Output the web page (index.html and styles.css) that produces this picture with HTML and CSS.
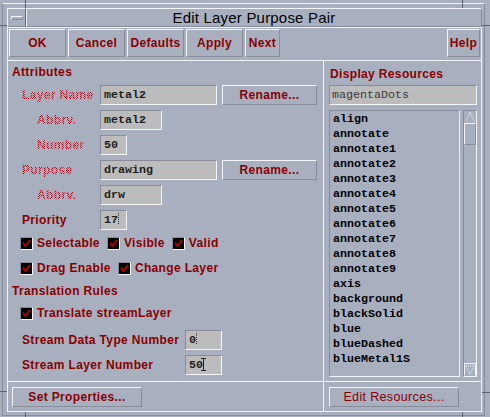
FILE: index.html
```html
<!DOCTYPE html>
<html>
<head>
<meta charset="utf-8">
<title>Edit Layer Purpose Pair</title>
<link rel="stylesheet" href="styles.css">
</head>
<body>
<div class="window">
  <span class="tick tv tl-top"></span>
  <span class="tick th tl-side"></span>
  <span class="tick tv tr-top"></span>
  <span class="tick th tr-side"></span>
  <span class="tick th bl-side"></span>
  <span class="tick tv bl-bot"></span>
  <span class="tick th br-side"></span>
  <span class="tick tv br-bot"></span>
  <div class="frame">
    <div class="titlebar">
      <div class="menubtn"><span class="dash"></span></div>
      <div class="title">Edit Layer Purpose Pair</div>
    </div>
    <div class="dialog">
      <div class="toolbar">
        <div class="btn tb">OK</div>
        <div class="btn tb">Cancel</div>
        <div class="btn tb">Defaults</div>
        <div class="btn tb">Apply</div>
        <div class="btn tb tb-next">Next</div>
        <div class="spacer"></div>
        <div class="btn tb tb-help">Help</div>
      </div>
      <div class="main">
        <div class="pane pane-l">
          <div class="body">
            <div class="sec">Attributes</div>
            <div class="rows">
              <div class="row">
                <span class="lbl stip">Layer Name</span>
                <span class="field f-long">metal2</span>
                <span class="btn rename">Rename...</span>
              </div>
              <div class="row">
                <span class="lbl stip ind alt">Abbrv.</span>
                <span class="field f-mid">metal2</span>
              </div>
              <div class="row">
                <span class="lbl stip ind">Number</span>
                <span class="field f-short">50</span>
              </div>
              <div class="row">
                <span class="lbl stip alt">Purpose</span>
                <span class="field f-long">drawing</span>
                <span class="btn rename">Rename...</span>
              </div>
              <div class="row">
                <span class="lbl stip ind">Abbrv.</span>
                <span class="field f-mid">drw</span>
              </div>
              <div class="row">
                <span class="lbl">Priority</span>
                <span class="field f-short">17<span class="caret"></span></span>
              </div>
            </div>
            <div class="chk-row cr1">
              <span class="chk"><span class="cb"><svg viewBox="0 0 11 11" width="11" height="11"><path d="M2 4.5 L4.5 8 L9 2" fill="none" stroke="#b00010" stroke-width="2"/></svg></span><span class="lbl">Selectable</span></span>
              <span class="chk"><span class="cb"><svg viewBox="0 0 11 11" width="11" height="11"><path d="M2 4.5 L4.5 8 L9 2" fill="none" stroke="#b00010" stroke-width="2"/></svg></span><span class="lbl">Visible</span></span>
              <span class="chk"><span class="cb"><svg viewBox="0 0 11 11" width="11" height="11"><path d="M2 4.5 L4.5 8 L9 2" fill="none" stroke="#b00010" stroke-width="2"/></svg></span><span class="lbl">Valid</span></span>
            </div>
            <div class="chk-row cr2">
              <span class="chk"><span class="cb"><svg viewBox="0 0 11 11" width="11" height="11"><path d="M2 4.5 L4.5 8 L9 2" fill="none" stroke="#b00010" stroke-width="2"/></svg></span><span class="lbl">Drag Enable</span></span>
              <span class="chk"><span class="cb"><svg viewBox="0 0 11 11" width="11" height="11"><path d="M2 4.5 L4.5 8 L9 2" fill="none" stroke="#b00010" stroke-width="2"/></svg></span><span class="lbl">Change Layer</span></span>
            </div>
            <div class="sec sec-small">Translation Rules</div>
            <div class="chk-row cr3">
              <span class="chk"><span class="cb"><svg viewBox="0 0 11 11" width="11" height="11"><path d="M2 4.5 L4.5 8 L9 2" fill="none" stroke="#b00010" stroke-width="2"/></svg></span><span class="lbl">Translate streamLayer</span></span>
            </div>
            <div class="row srow1">
              <span class="lbl wide">Stream Data Type Number</span>
              <span class="field f-stream">0<span class="caret"></span></span>
            </div>
            <div class="row srow2">
              <span class="lbl wide">Stream Layer Number</span>
              <span class="field f-stream">50<span class="ibeam"></span></span>
            </div>
          </div>
          <div class="foot foot-l">
            <div class="btn btn-wide">Set Properties...</div>
          </div>
        </div>
        <div class="pane pane-r">
          <div class="body body-r">
            <div class="sec sec-r">Display Resources</div>
            <div class="field f-res">magentaDots</div>
            <div class="list-wrap">
              <div class="list">
                <div>align</div>
                <div>annotate</div>
                <div>annotate1</div>
                <div>annotate2</div>
                <div>annotate3</div>
                <div>annotate4</div>
                <div>annotate5</div>
                <div>annotate6</div>
                <div>annotate7</div>
                <div>annotate8</div>
                <div>annotate9</div>
                <div>axis</div>
                <div>background</div>
                <div>blackSolid</div>
                <div>blue</div>
                <div>blueDashed</div>
                <div>blueMetal1S</div>
              </div>
              <div class="sb">
                <svg class="arrow" viewBox="0 0 12 12" width="12" height="12"><path d="M6 1.5 L1.5 10.5 M6 1.5 L10.5 10.5" fill="none" stroke="#f4f5f8" stroke-width="1" stroke-dasharray="1 1"/></svg>
                <div class="thumb"></div>
                <div class="trough"></div>
                <svg class="arrow down" viewBox="0 0 12 13" width="12" height="13"><path d="M0.5 12.5 V0.5 H11.5 V12.5" fill="none" stroke="#f4f5f8" stroke-width="1"/><path d="M6 11 L2 3 M6 11 L10 3 M2 3 H10" fill="none" stroke="#f4f5f8" stroke-width="1" stroke-dasharray="1 1"/></svg>
              </div>
            </div>
          </div>
          <div class="foot foot-r">
            <div class="btn btn-wide btn-reg">Edit Resources...</div>
          </div>
        </div>
      </div>
    </div>
  </div>
</div>
</body>
</html>
```
FILE: styles.css
```css
:root {
  --bg: #a8b0c0;
  --light: #f4f5f8;
  --dark: #878d98;
  --field: #bcbcbc;
  --red: #880000;
}

html, body {
  margin: 0;
  background: var(--bg);
  font-family: "Liberation Sans", Arial, sans-serif;
}

.window {
  position: relative;
  width: 490px;
  height: 417px;
  box-sizing: border-box;
  padding: 3px 5px 1px 2px;
  background: var(--bg);
  overflow: hidden;
}

.tick {
  position: absolute;
  background: #5e636c;
}
.tv { width: 1px; }
.th { height: 1px; }
.tl-top { left: 25px; top: 0; height: 8px; }
.tl-side { left: 0; top: 25px; width: 7px; }
.tr-top { left: 462px; top: 0; height: 8px; }
.tr-side { left: 482px; top: 25px; width: 8px; }
.bl-side { left: 0; top: 391px; width: 7px; }
.bl-bot { left: 25px; top: 412px; height: 5px; }
.br-side { left: 482px; top: 392px; width: 8px; }
.br-bot { left: 462px; top: 412px; height: 5px; }

.frame {
  height: 100%;
  box-sizing: border-box;
  border: 1px solid var(--dark);
  border-top-color: var(--light);
  padding: 4px 2px 3px 4px;
  display: flex;
  flex-direction: column;
}

.titlebar {
  display: flex;
  height: 19px;
  flex: none;
}

.menubtn {
  width: 19px;
  box-sizing: border-box;
  border: 1px solid;
  border-color: var(--light) #5e636c var(--dark) var(--light);
  display: flex;
  align-items: center;
  justify-content: center;
}

.dash {
  width: 12px;
  height: 4px;
  box-sizing: border-box;
  border: 1px solid;
  border-color: var(--light) var(--dark) var(--dark) var(--light);
}

.title {
  flex: 1;
  box-sizing: border-box;
  border: 1px solid;
  border-color: var(--light) var(--dark) var(--dark) var(--light);
  text-align: center;
  font-size: 15px;
  line-height: 17px;
  letter-spacing: 0.2px;
  color: #000;
}

.dialog {
  flex: 1;
  min-height: 0;
  display: flex;
  flex-direction: column;
  border: 1px solid var(--light);
}

.toolbar {
  display: flex;
  gap: 2px;
  height: 28px;
  padding: 1px 1px 3px 1px;
  border-bottom: 1px solid var(--light);
  flex: none;
}

.btn {
  box-sizing: border-box;
  border: 1px solid;
  border-color: var(--light) var(--dark) var(--dark) var(--light);
  display: flex;
  align-items: center;
  justify-content: center;
  color: var(--red);
  font-weight: bold;
  font-size: 12px;
  letter-spacing: 0.35px;
  white-space: nowrap;
}

.tb { width: 57px; height: 28px; }
.tb-next { width: 35px; }
.tb-help { width: 33px; }
.spacer { flex: 1; }

.main {
  flex: 1;
  min-height: 0;
  display: flex;
}

.pane {
  display: flex;
  flex-direction: column;
}
.pane-l {
  width: 315px;
  flex: none;
  border-right: 1px solid var(--light);
}
.pane-r { flex: 1; }

.body {
  flex: 1;
  min-height: 0;
  display: flex;
  flex-direction: column;
}
.body-r { padding-left: 5px; }

.foot {
  height: 24px;
  padding-top: 5px;
  border-top: 1px solid var(--light);
  flex: none;
}
.foot-l { padding-left: 4px; }
.foot-r { padding-left: 5px; }

.btn-wide { width: 130px; height: 20px; }
.btn-reg { font-weight: normal; font-size: 12.5px; }

.sec {
  height: 24px;
  line-height: 22px;
  padding-left: 4px;
  color: var(--red);
  font-weight: bold;
  font-size: 12px;
  letter-spacing: 0.35px;
  flex: none;
}
.sec-small {
  height: 14px;
  line-height: 14px;
  margin-top: 9px;
}
.sec-r {
  padding-left: 1px;
  line-height: 26px;
}

.rows {
  display: flex;
  flex-direction: column;
  gap: 5px;
}

.row {
  display: flex;
  align-items: center;
  height: 20px;
  padding-left: 14px;
  flex: none;
}

.lbl {
  box-sizing: border-box;
  color: var(--red);
  font-weight: bold;
  font-size: 12px;
  letter-spacing: 0.35px;
  white-space: nowrap;
}
.row .lbl {
  width: 78px;
  height: 20px;
  line-height: 20px;
}
.row .lbl.ind { padding-left: 15px; }
.row .lbl.wide { width: 163px; }

.stip {
  color: #a00010;
  -webkit-mask-image:
    repeating-linear-gradient(90deg, #000 0 1px, transparent 1px 2px),
    repeating-linear-gradient(180deg, #000 0 1px, transparent 1px 2px);
  -webkit-mask-composite: xor;
  mask-image:
    repeating-linear-gradient(90deg, #000 0 1px, transparent 1px 2px),
    repeating-linear-gradient(180deg, #000 0 1px, transparent 1px 2px);
  mask-composite: exclude;
}
.stip.alt {
  -webkit-mask-position: 0 0, 0 1px;
  mask-position: 0 0, 0 1px;
}

.field {
  box-sizing: border-box;
  height: 20px;
  border: 1px solid;
  border-color: var(--dark) var(--light) var(--light) var(--dark);
  background: var(--field);
  padding-left: 3px;
  font-family: "Liberation Mono", "DejaVu Sans Mono", monospace;
  font-weight: bold;
  font-size: 11.67px;
  line-height: 18px;
  color: #1e1e1e;
  white-space: nowrap;
}
.f-long { width: 117px; }
.f-mid { width: 62px; }
.f-short { width: 27px; }
.f-stream { width: 37px; }
.f-res {
  width: 148px;
  flex: none;
  padding-left: 2px;
  font-weight: normal;
  color: #3a3a3a;
}

.rename {
  width: 95px;
  height: 20px;
  margin-left: 5px;
}

.caret {
  display: inline-block;
  width: 1px;
  height: 12px;
  vertical-align: -2px;
  background: repeating-linear-gradient(to bottom, #333 0 1px, transparent 1px 2px);
}

.ibeam {
  display: inline-block;
  width: 5px;
  height: 13px;
  box-sizing: border-box;
  vertical-align: -3px;
  margin-left: -2px;
  border-top: 1px solid #222;
  border-bottom: 1px solid #222;
  background: linear-gradient(#222, #222) center / 1px 100% no-repeat;
}

.chk-row {
  display: flex;
  align-items: center;
  gap: 7px;
  height: 14px;
  padding-left: 12px;
  flex: none;
}
.cr1 { margin-top: 6px; }
.cr2 { margin-top: 11px; }
.cr3 { margin-top: 8px; }
.srow1 { margin-top: 10px; }
.srow2 { margin-top: 5px; }

.chk {
  display: flex;
  align-items: center;
  gap: 4px;
}

.cb {
  width: 13px;
  height: 13px;
  box-sizing: border-box;
  border: 1px solid;
  border-color: var(--dark) var(--light) var(--light) var(--dark);
  background: #000;
  display: flex;
}
.cb svg { display: block; }

.list-wrap {
  display: flex;
  gap: 3px;
  margin-top: 5px;
  height: 267px;
  flex: none;
}

.list {
  width: 131px;
  height: 267px;
  box-sizing: border-box;
  border: 1px solid;
  border-color: var(--dark) var(--light) var(--light) var(--dark);
  padding: 1px 0 0 3px;
  overflow: hidden;
  font-family: "Liberation Mono", "DejaVu Sans Mono", monospace;
  font-weight: bold;
  font-size: 11.67px;
  line-height: 15px;
  color: #000;
}

.sb {
  width: 14px;
  height: 267px;
  box-sizing: border-box;
  border: 1px solid;
  border-color: var(--dark) var(--light) var(--light) var(--dark);
  display: flex;
  flex-direction: column;
}
.arrow { display: block; flex: none; }
.thumb {
  height: 22px;
  box-sizing: border-box;
  border: 1px solid;
  border-color: var(--light) var(--dark) var(--dark) var(--light);
  flex: none;
}
.trough { flex: 1; }
```
